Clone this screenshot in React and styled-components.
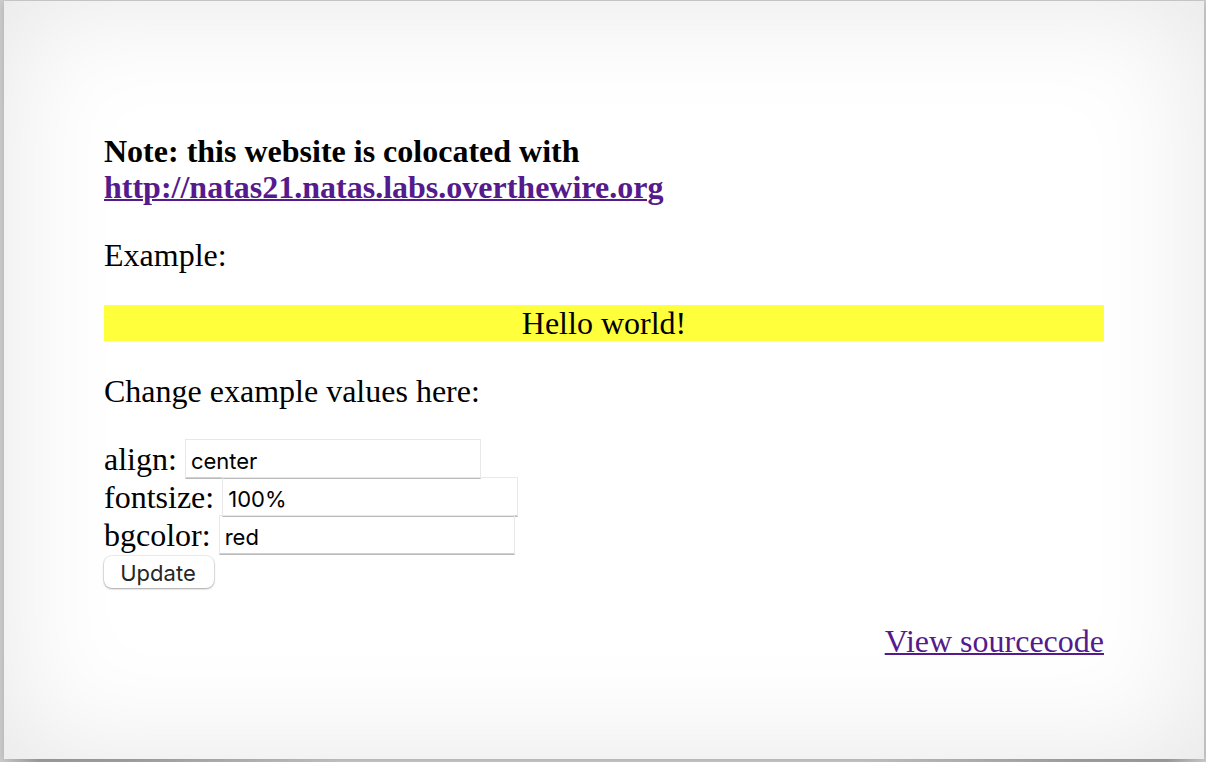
import React from "react";
import styled, { createGlobalStyle } from "styled-components";

const GlobalStyle = createGlobalStyle`
  *, *::before, *::after { box-sizing: border-box; }
  body {
    margin: 0;
    background: #ccc;
    color: #000;
    font: 32px/36px "Liberation Serif", "Times New Roman", serif;
  }
`;

const Page = styled.div`
  min-height: 100vh;
  display: flex;
  padding: 1px 2px 3px 4px;
  overflow: hidden;
  background: linear-gradient(
      to right,
      transparent 8px,
      rgba(0, 0, 0, 0.2) 40px,
      rgba(0, 0, 0, 0.18) 120px,
      transparent 340px,
      transparent calc(100% - 340px),
      rgba(0, 0, 0, 0.18) calc(100% - 120px),
      rgba(0, 0, 0, 0.2) calc(100% - 40px),
      transparent calc(100% - 8px)
    )
    bottom / 100% 3px no-repeat;
`;

const Content = styled.main`
  flex: 1;
  min-width: 0;
  padding: 100px;
  background: #fff;
  box-shadow:
    0 2px 8px rgba(0, 0, 0, 0.15),
    inset 0 0 120px rgba(0, 0, 0, 0.1);
`;

const Paragraph = styled.p`
  margin: 32px 0;
  font-weight: ${({ $bold }) => ($bold ? 700 : 400)};
`;

const Link = styled.a`
  color: #551a8b;
  text-decoration: underline;
  text-decoration-thickness: 2px;
`;

const Example = styled.div`
  background: #ffff3b;
  text-align: center;
`;

const Form = styled.form`
  display: flex;
  flex-direction: column;
  align-items: flex-start;
`;

const Field = styled.div`
  display: flex;
  gap: 8px;
`;

const TextInput = styled.input`
  width: 296px;
  height: 40px;
  margin: -2px 0 0;
  padding: 4px 5px 0;
  border: 1px solid #e8e8e8;
  border-bottom-color: #bbb;
  border-radius: 0;
  background: transparent;
  box-shadow: inset 0 -1px 0 #d0d0d0;
  color: #000;
  font: 22px Inter, sans-serif;
`;

const ButtonRow = styled.div`
  height: 36px;
  display: flex;
  align-items: flex-start;
`;

const Button = styled.button`
  height: 32px;
  width: 110px;
  margin-top: 1px;
  padding: 2px 2px 0 0;
  border: 0;
  border-radius: 8px;
  background: #fff;
  box-shadow: 0 0 1px 1px rgba(0, 0, 0, 0.08), 0 1px 2px rgba(0, 0, 0, 0.3);
  color: #262626;
  font: 22px Inter, sans-serif;
`;

const Source = styled.div`
  margin-top: 32px;
  text-align: right;
`;

const fields = [
  { name: "align", value: "center" },
  { name: "fontsize", value: "100%" },
  { name: "bgcolor", value: "red" },
];

export default function App() {
  return (
    <Page>
      <GlobalStyle />
      <Content>
        <Paragraph $bold>
          Note: this website is colocated with
          <br />
          <Link href="http://natas21.natas.labs.overthewire.org">
            http://natas21.natas.labs.overthewire.org
          </Link>
        </Paragraph>
        <Paragraph>Example:</Paragraph>
        <Example>Hello world!</Example>
        <Paragraph>Change example values here:</Paragraph>
        <Form onSubmit={(event) => event.preventDefault()}>
          {fields.map(({ name, value }) => (
            <Field key={name}>
              <label htmlFor={name}>{name}:</label>
              <TextInput id={name} name={name} defaultValue={value} />
            </Field>
          ))}
          <ButtonRow>
            <Button type="submit">Update</Button>
          </ButtonRow>
        </Form>
        <Source>
          <Link href="#source">View sourcecode</Link>
        </Source>
      </Content>
    </Page>
  );
}
